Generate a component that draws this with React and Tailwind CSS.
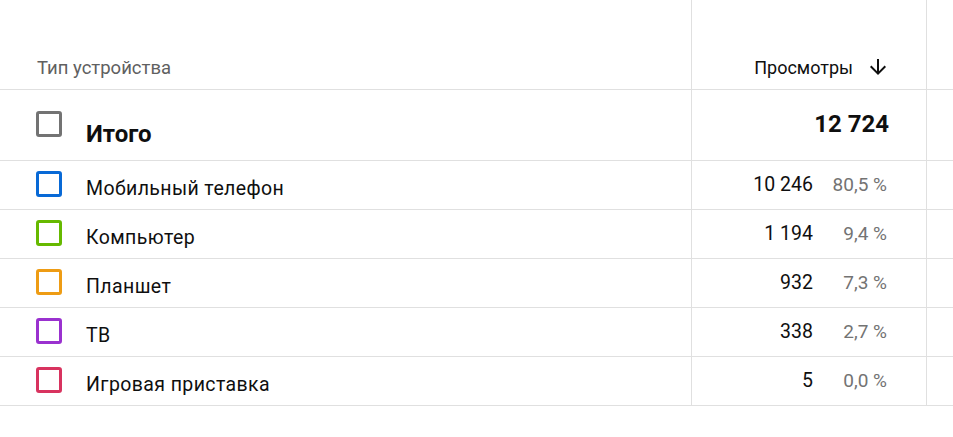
const ROWS = [
  { name: 'Мобильный телефон', views: '10 246', share: '80,5 %', color: 'border-[#0869d6]' },
  { name: 'Компьютер',         views: '1 194',  share: '9,4 %',  color: 'border-[#66b900]' },
  { name: 'Планшет',           views: '932',    share: '7,3 %',  color: 'border-[#ee9c14]' },
  { name: 'ТВ',                views: '338',    share: '2,7 %',  color: 'border-[#9a31cf]' },
  { name: 'Игровая приставка', views: '5',      share: '0,0 %',  color: 'border-[#d8335f]' },
];

function Box({ color }) {
  return <div className={`w-[26px] h-[26px] shrink-0 rounded-[3px] border-[3px] ${color}`} />;
}

function SortArrow() {
  return (
    <svg className="w-6 h-6 shrink-0" viewBox="0 0 24 24" fill="currentColor">
      <path d="M20 12l-1.41-1.41L13 16.17V4h-2v12.17l-5.58-5.59L4 12l8 8 8-8z" />
    </svg>
  );
}

export default function App() {
  return (
    <div className="w-[953px] h-[437px] bg-white text-[#0f0f0f]" style={{ fontFamily: 'Roboto, "Noto Sans", sans-serif' }}>
      {/* header */}
      <div className="flex h-[90px] border-b border-[#e0e0e0]">
        <div className="w-[692px] border-r border-[#e0e0e0] pl-[37px] pt-[56px] text-[18.5px] leading-6 text-[#606060]">
          Тип устройства
        </div>
        <div className="w-[235px] border-r border-[#e0e0e0] pr-[36px] pt-[55px] flex justify-end items-start gap-[13px]">
          <span className="text-[18px] leading-6 mt-[1px]">Просмотры</span>
          <SortArrow />
        </div>
        <div className="flex-1" />
      </div>

      {/* total */}
      <div className="flex h-[71px] border-b border-[#e0e0e0]">
        <div className="w-[692px] border-r border-[#e0e0e0] pl-[36px] pt-[21px] flex items-start gap-[24px]">
          <Box color="border-[#737373]" />
          <span className="mt-[9px] text-[24px] leading-7 font-bold">Итого</span>
        </div>
        <div className="w-[235px] border-r border-[#e0e0e0] pr-[37px] pt-[20px] text-right text-[24px] leading-7 font-bold">
          12 724
        </div>
        <div className="flex-1" />
      </div>

      {ROWS.map(r => (
        <div key={r.name} className="flex h-[49px] border-b border-[#e0e0e0]">
          <div className="w-[692px] border-r border-[#e0e0e0] pl-[36px] pt-[10px] flex items-start gap-[24px]">
            <Box color={r.color} />
            <span className="mt-[6px] text-[19.5px] leading-6 tracking-[0.4px]">{r.name}</span>
          </div>
          <div className="w-[235px] border-r border-[#e0e0e0] pr-[39px] pt-[12px] flex justify-end items-start leading-6">
            <span className="text-[19.5px]">{r.views}</span>
            <span className="w-[74px] text-right text-[19px] text-[#737373]">{r.share}</span>
          </div>
          <div className="flex-1" />
        </div>
      ))}
    </div>
  );
}
